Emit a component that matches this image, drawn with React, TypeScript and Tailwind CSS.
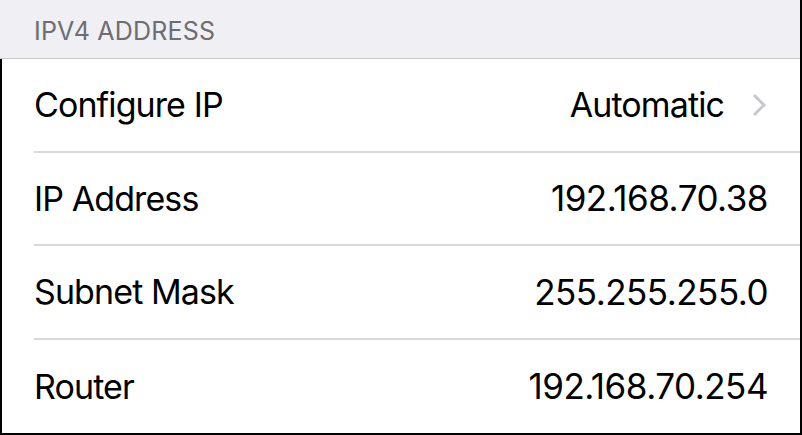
import React from "react";

const rows = [
  { label: "Configure IP", value: "Automatic", chevron: true, textValue: true },
  { label: "IP Address", value: "192.168.70.38" },
  { label: "Subnet Mask", value: "255.255.255.0" },
  { label: "Router", value: "192.168.70.254" },
];

export default function App() {
  return (
    <div
      className="w-[802px] h-[435px] bg-white flex flex-col border-r-2 border-black overflow-hidden"
      style={{ fontFamily: "Inter, 'Noto Sans', sans-serif" }}
    >
      <div className="h-[59px] bg-[#efeff4] border-b border-[#c8c7cc] flex items-end pl-[34px] pb-[14px]">
        <span className="text-[25px] leading-none text-[#6d6d72] tracking-[0.2px]">IPV4 ADDRESS</span>
      </div>
      <div className="flex-1 flex flex-col border-l-2 border-black border-b-2">
        {rows.map((r, i) => (
          <div key={r.label} className="flex-1 flex flex-col pl-[32px]">
            <div className="flex-1 flex items-center justify-between pr-[32px]">
              <span className="text-[34px] text-black tracking-[-0.9px]">{r.label}</span>
              <div className="flex items-center">
                {r.textValue ? (
                  <span className="text-[34px] text-black tracking-[-0.9px]">{r.value}</span>
                ) : (
                  <span className="text-[35px] text-black tracking-[-0.5px]">{r.value}</span>
                )}
                {r.chevron && (
                  <svg width="18" height="28" viewBox="0 0 18 28" className="ml-[26px]">
                    <path d="M4 4 L14 14 L4 24" fill="none" stroke="#c7c7cc" strokeWidth="3" />
                  </svg>
                )}
              </div>
            </div>
            {i < rows.length - 1 && <div className="h-[2px] bg-[#d9d9dc]" />}
          </div>
        ))}
      </div>
    </div>
  );
}
